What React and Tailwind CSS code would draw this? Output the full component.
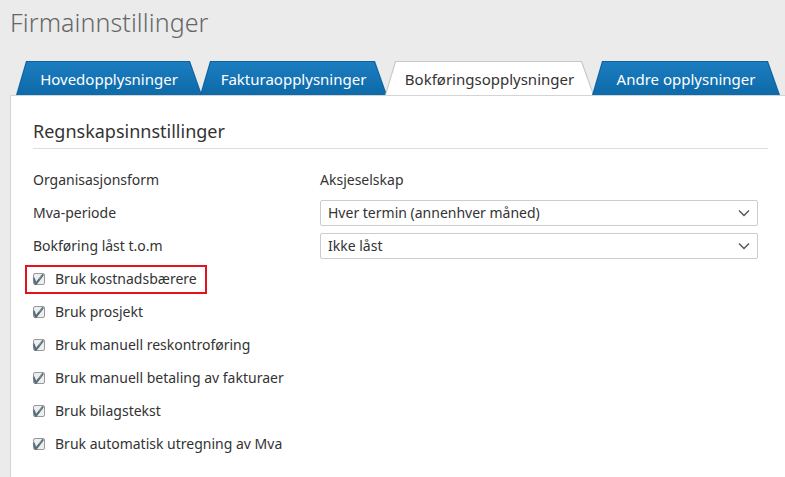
import React from "react";

const Tab = ({ label, active, w }) => (
  <div className={`relative h-[34px] ${w} -mr-[2px]`}>
    <div
      className={`absolute inset-0 [clip-path:polygon(10px_0,calc(100%-12px)_0,100%_100%,0_100%)] ${active ? "bg-[#c8c8c8]" : "bg-[#0c63a0]"}`}
    />
    <div
      className={`absolute inset-[1px] bottom-0 flex items-center justify-center rounded-t-[6px] [clip-path:polygon(10px_0,calc(100%-12px)_0,100%_100%,0_100%)] ${active ? "bg-white text-[#333]" : "bg-gradient-to-b from-[#1b7dc0] to-[#0e6aa8] text-white"} text-[15px] pt-[1px]`}
    >
      {label}
    </div>
  </div>
);

const Check = ({ label }) => (
  <div className="flex items-center h-[33px]">
    <span className="w-[12px] h-[12px] border border-[#999] rounded-[2px] bg-[#eee] flex items-center justify-center text-[10px] leading-none text-[#333] mr-[10px]">✔</span>
    <span>{label}</span>
  </div>
);

const Select = ({ value }) => (
  <div className="w-[438px] h-[26px] border border-[#ccc] rounded-[2px] flex items-center justify-between px-[7px] bg-white">
    <span>{value}</span>
    <svg width="12" height="8" viewBox="0 0 12 8"><path d="M1 1.5 6 6.5 11 1.5" fill="none" stroke="#555" strokeWidth="1.4" /></svg>
  </div>
);

export default function App() {
  return (
    <div className="w-[785px] h-[477px] overflow-hidden bg-[#ebebeb] text-[#333] text-[14px] font-['Open_Sans',sans-serif]">
      <div className="pl-[10px] pt-[4px] h-[61px] text-[25px] text-[#666] font-light tracking-[0.1px]">Firmainnstillinger</div>
      <div className="flex pl-[16px]">
        <Tab label="Hovedopplysninger" w="w-[186px]" />
        <Tab label="Fakturaopplysninger" w="w-[187px]" />
        <Tab label="Bokføringsopplysninger" w="w-[209px]" active />
        <Tab label="Andre opplysninger" w="w-[188px]" />
      </div>
      <div className="ml-[10px] bg-white border-l border-t border-[#d4d4d4] h-[400px] pl-[22px] pr-[17px] pt-[22px]">
        <div className="text-[18px] text-[#333] border-b border-[#ddd] pb-[3px] mb-[14px]">Regnskapsinnstillinger</div>
        <div className="flex items-center h-[33px]"><span className="w-[287px]">Organisasjonsform</span><span>Aksjeselskap</span></div>
        <div className="flex items-center h-[33px]"><span className="w-[287px]">Mva-periode</span><Select value="Hver termin (annenhver måned)" /></div>
        <div className="flex items-center h-[33px]"><span className="w-[287px]">Bokføring låst t.o.m</span><Select value="Ikke låst" /></div>
        <div className="relative">
          <div className="absolute -left-[8px] top-[3px] w-[182px] h-[29px] border-2 border-[#e4121d]" />
          <Check label="Bruk kostnadsbærere" />
        </div>
        <Check label="Bruk prosjekt" />
        <Check label="Bruk manuell reskontroføring" />
        <Check label="Bruk manuell betaling av fakturaer" />
        <Check label="Bruk bilagstekst" />
        <Check label="Bruk automatisk utregning av Mva" />
      </div>
    </div>
  );
}
